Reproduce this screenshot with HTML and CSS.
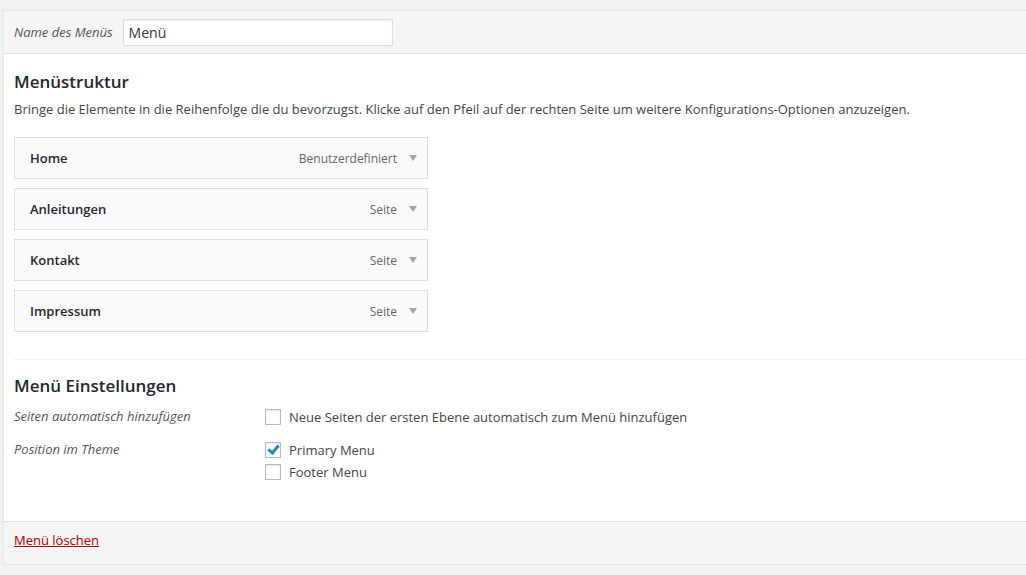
FILE: index.html
```html
<!DOCTYPE html>
<html lang="de">
<head>
  <meta charset="UTF-8" />
  <title>Menüs bearbeiten</title>
  <link rel="stylesheet" href="styles.css">
</head>
<body>
  <div class="menu-edit">
    <div class="nav-menu-header">
      <label class="menu-name-label" for="menu-name">Name des Menüs</label>
      <input class="menu-name" id="menu-name" type="text" value="Menü">
    </div>

    <div class="post-body">
      <h3>Menüstruktur</h3>
      <p class="drag-instructions">Bringe die Elemente in die Reihenfolge die du bevorzugst. Klicke auf den Pfeil auf der rechten Seite um weitere Konfigurations-Optionen anzuzeigen.</p>

      <ul class="menu">
        <li class="menu-item">
          <span class="item-title">Home</span>
          <span class="item-controls">
            <span class="item-type">Benutzerdefiniert</span>
            <span class="item-edit"></span>
          </span>
        </li>
        <li class="menu-item">
          <span class="item-title">Anleitungen</span>
          <span class="item-controls">
            <span class="item-type">Seite</span>
            <span class="item-edit"></span>
          </span>
        </li>
        <li class="menu-item">
          <span class="item-title">Kontakt</span>
          <span class="item-controls">
            <span class="item-type">Seite</span>
            <span class="item-edit"></span>
          </span>
        </li>
        <li class="menu-item">
          <span class="item-title">Impressum</span>
          <span class="item-controls">
            <span class="item-type">Seite</span>
            <span class="item-edit"></span>
          </span>
        </li>
      </ul>

      <div class="menu-settings">
        <h3>Menü Einstellungen</h3>
        <dl class="menu-setting">
          <dt>Seiten automatisch hinzufügen</dt>
          <dd>
            <label class="check"><span class="box"></span>Neue Seiten der ersten Ebene automatisch zum Menü hinzufügen</label>
          </dd>
        </dl>
        <dl class="menu-setting">
          <dt>Position im Theme</dt>
          <dd>
            <label class="check"><span class="box checked"></span>Primary Menu</label>
            <label class="check"><span class="box"></span>Footer Menu</label>
          </dd>
        </dl>
      </div>
    </div>

    <div class="nav-menu-footer">
      <a class="menu-delete" href="#">Menü löschen</a>
    </div>
  </div>
</body>
</html>
```

FILE: styles.css
```css
body {
  margin: 0;
  background: #f1f1f1;
  font-family: "Open Sans", "Liberation Sans", sans-serif;
  font-size: 13px;
  color: #444;
  overflow: hidden;
}

.menu-edit {
  margin: 10px -20px 0 3px;
  border: 1px solid #e5e5e5;
  background: #fff;
  box-shadow: 0 1px 1px rgba(0, 0, 0, .04);
}

.nav-menu-header {
  display: flex;
  align-items: center;
  height: 42px;
  padding: 0 10px;
  background: #f5f5f5;
  border-bottom: 1px solid #dfdfdf;
}

.menu-name-label {
  font-style: italic;
  color: #555;
  margin-right: 10px;
}

.menu-name {
  width: 270px;
  height: 27px;
  box-sizing: border-box;
  padding: 3px 5px;
  border: 1px solid #ddd;
  box-shadow: inset 0 1px 2px rgba(0, 0, 0, .07);
  font-family: inherit;
  font-size: 14px;
  color: #32373c;
  outline: none;
}

.post-body {
  padding: 0 10px 10px;
  border-top: 1px solid #fff;
  border-bottom: 1px solid #dfdfdf;
  background: #fff;
  height: 456px;
}

h3 {
  margin: 17px 0 0;
  font-size: 17px;
  font-weight: 600;
  color: #23282d;
  line-height: 20px;
}

.drag-instructions {
  margin: 8px 0 0;
  line-height: 19px;
  color: #444;
}

.menu {
  list-style: none;
  margin: 18px 0 0;
  padding: 0;
}

.menu-item {
  display: flex;
  align-items: center;
  justify-content: space-between;
  width: 382px;
  height: 20px;
  padding: 10px 15px;
  margin-bottom: 9px;
  background: #fafafa;
  border: 1px solid #dfdfdf;
}

.item-title {
  font-weight: 600;
  color: #23282d;
}

.item-controls {
  display: flex;
  align-items: center;
  margin-right: -5px;
}

.item-type {
  font-size: 12px;
  color: #666;
}

.item-edit {
  width: 0;
  height: 0;
  margin-left: 12px;
  border-left: 4px solid transparent;
  border-right: 4px solid transparent;
  border-top: 6px solid #a0a5aa;
}

.menu-settings {
  margin: 27px -10px 0 0;
  border-top: 1px solid #eee;
}

.menu-settings h3 {
  margin-top: 16px;
}

.menu-setting {
  display: flex;
  margin: 10px 0 0;
}

.menu-setting + .menu-setting {
  margin-top: 11px;
}

.menu-setting dt {
  width: 251px;
  font-style: italic;
  color: #555;
  line-height: 20px;
}

.menu-setting dd {
  margin: 0;
}

.check {
  display: flex;
  align-items: center;
  height: 22px;
  color: #444;
}

.box {
  position: relative;
  width: 14px;
  height: 14px;
  margin-right: 8px;
  border: 1px solid #b4b9be;
  background: #fff;
  box-shadow: inset 0 1px 2px rgba(0, 0, 0, .1);
}

.box.checked::after {
  content: "";
  position: absolute;
  left: 4px;
  top: 0;
  width: 4px;
  height: 8px;
  border-right: 3px solid #1e8cbe;
  border-bottom: 3px solid #1e8cbe;
  transform: rotate(40deg);
}

.nav-menu-footer {
  height: 42px;
  padding: 0 10px;
  background: #f5f5f5;
  display: flex;
  align-items: center;
}

.menu-delete {
  margin-top: -6px;
  color: #a00;
  text-decoration: underline;
  font-size: 13px;
}
```
